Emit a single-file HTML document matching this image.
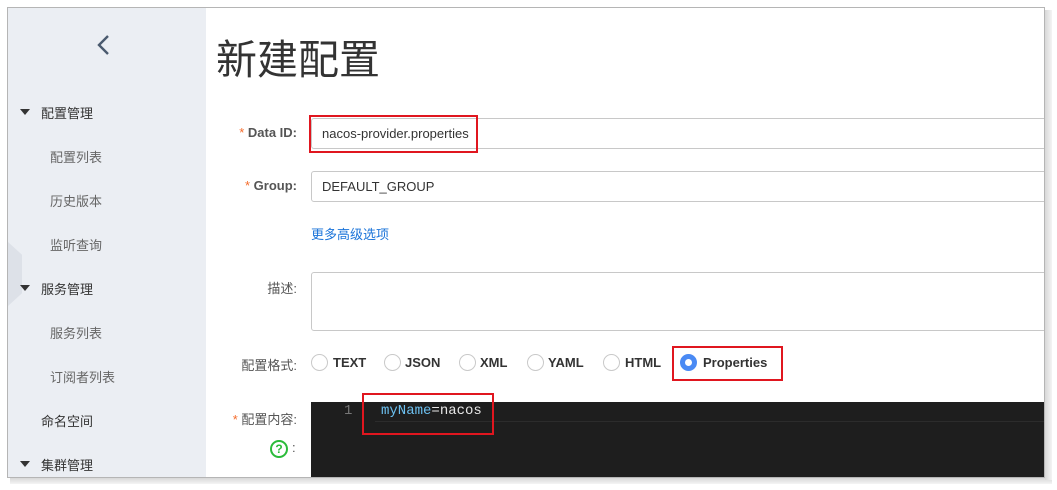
<!DOCTYPE html>
<html><head><meta charset="utf-8"><style>
*{margin:0;padding:0;box-sizing:border-box}
body{width:1057px;height:490px;background:#fff;position:relative;overflow:hidden;font-family:"Liberation Sans","Noto Sans CJK SC",sans-serif;}
.a{position:absolute}
.frame{left:7px;top:7px;width:1038px;height:471px;border:1px solid #b5b5b5;}
.shadow{left:10px;top:478px;width:1042px;height:6px;background:linear-gradient(#d8d8d8,#f4f4f4);}
.shadowr{left:1045px;top:10px;width:7px;height:470px;background:linear-gradient(90deg,#d8d8d8,#f4f4f4);}
.side{left:8px;top:8px;width:198px;height:469px;background:#ebeef3;}
.side .t{position:absolute;font-size:13px;color:#333}
.side .s{position:absolute;font-size:13px;color:#666;left:42px}
.tri{position:absolute;left:12px;width:0;height:0;border-left:5px solid transparent;border-right:5px solid transparent;border-top:6px solid #333}
.lbl{position:absolute;font-size:13px;color:#555;font-weight:bold;text-align:right;right:747px}
.star{color:#f56c2c;font-weight:normal}
.inp{position:absolute;left:311px;width:740px;border:1px solid #c8c8c8;border-radius:3px;font-size:13px;color:#333;padding-left:10px;display:flex;align-items:center;background:#fff}
.red{position:absolute;border:2px solid #e0161f}
.rad{position:absolute;top:354px;width:17px;height:17px;border:1px solid #c9c9c9;border-radius:50%;background:#fff}
.rl{position:absolute;top:355px;font-size:13px;font-weight:bold;color:#333}
.clip{position:absolute;left:0;top:0;width:1044px;height:490px;overflow:hidden}
</style></head><body>
<div class="a shadow"></div><div class="a shadowr"></div>
<div class="clip">
<div class="a side">
<svg style="position:absolute;left:87px;top:26px" width="16" height="22"><path d="M13 2 L4 11 L13 20" stroke="#4a5a6e" stroke-width="2.4" fill="none"/></svg>
<div style="position:absolute;left:0;top:234px;width:14px;height:64px;background:#dde1e8;clip-path:polygon(0 0,100% 20%,100% 80%,0 100%)"></div>
<div class="tri" style="top:101px"></div><div class="t" style="left:33px;top:95px">配置管理</div>
<div class="s" style="top:139px">配置列表</div>
<div class="s" style="top:183px">历史版本</div>
<div class="s" style="top:227px">监听查询</div>
<div class="tri" style="top:277px"></div><div class="t" style="left:33px;top:271px">服务管理</div>
<div class="s" style="top:315px">服务列表</div>
<div class="s" style="top:359px">订阅者列表</div>
<div class="t" style="left:33px;top:403px">命名空间</div>
<div class="tri" style="top:453px"></div><div class="t" style="left:33px;top:447px">集群管理</div>
</div>
<div class="a" style="left:216px;top:35px;font-size:41px;color:#333;line-height:50px">新建配置</div>
<div class="lbl" style="top:125px"><span class="star">*</span> Data ID:</div>
<div class="inp" style="top:118px;height:31px">nacos-provider.properties</div>
<div class="red" style="left:309px;top:115px;width:169px;height:38px"></div>
<div class="lbl" style="top:178px"><span class="star">*</span> Group:</div>
<div class="inp" style="top:171px;height:31px">DEFAULT_GROUP</div>
<div class="a" style="left:311px;top:224px;font-size:13px;color:#1a73d9">更多高级选项</div>
<div class="lbl" style="top:278px;font-weight:normal;color:#555">描述:</div>
<div class="inp" style="top:272px;height:59px"></div>
<div class="lbl" style="top:355px;font-weight:normal;color:#555">配置格式:</div>
<div class="rad" style="left:311px"></div><div class="rl" style="left:333px">TEXT</div>
<div class="rad" style="left:384px"></div><div class="rl" style="left:405px">JSON</div>
<div class="rad" style="left:459px"></div><div class="rl" style="left:480px">XML</div>
<div class="rad" style="left:527px"></div><div class="rl" style="left:548px">YAML</div>
<div class="rad" style="left:603px"></div><div class="rl" style="left:625px">HTML</div>
<div class="rad" style="left:680px;border:5px solid #4a8af4;background:#fff"></div><div class="rl" style="left:703px">Properties</div>
<div class="red" style="left:672px;top:346px;width:111px;height:35px"></div>
<div class="lbl" style="top:409px;font-weight:normal;color:#555"><span class="star">*</span> 配置内容:</div>
<div class="a" style="left:270px;top:440px;width:18px;height:18px;border:2px solid #2bbb3a;border-radius:50%;color:#2bbb3a;font-size:12px;font-weight:bold;text-align:center;line-height:14px">?</div>
<div class="a" style="left:292px;top:440px;font-size:13px;color:#555">:</div>
<div class="a" style="left:311px;top:402px;width:733px;height:75px;background:#1e1e1e"></div>
<div class="a" style="left:375px;top:421px;width:669px;height:1px;background:#2c2c2c"></div>
<div class="a" style="left:344px;top:403px;font-family:'Liberation Mono',monospace;font-size:14px;color:#777">1</div>
<div class="a" style="left:381px;top:403px;font-family:'Liberation Mono',monospace;font-size:14px;color:#e8e8e8"><span style="color:#6cc0f0">myName</span>=nacos</div>
<div class="red" style="left:362px;top:393px;width:132px;height:42px"></div>
</div>
<div class="a frame"></div>
</body></html>
